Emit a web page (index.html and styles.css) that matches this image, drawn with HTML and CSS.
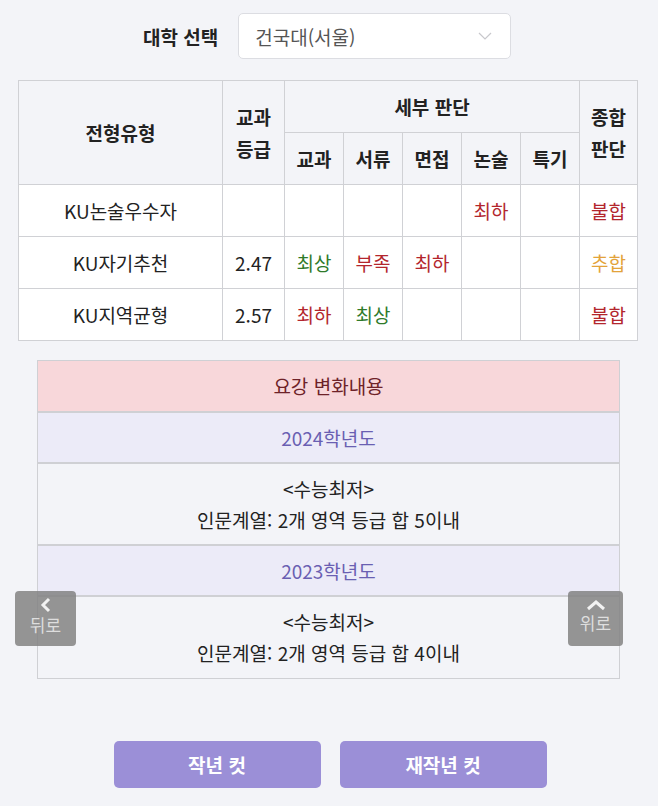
FILE: index.html
```html
<!DOCTYPE html>
<html lang="ko">
<head>
<meta charset="utf-8">
<link rel="stylesheet" href="styles.css">
</head>
<body>
<div class="page">
  <div class="select-row">
    <label class="select-label">대학 선택</label>
    <div class="select-box">
      <span class="select-text">건국대(서울)</span>
      <svg class="chev" width="14" height="8" viewBox="0 0 14 8"><path d="M1 1 L7 7 L13 1" fill="none" stroke="#c8c8cc" stroke-width="1.2"/></svg>
    </div>
  </div>

  <table class="result">
    <colgroup>
      <col style="width:204px"><col style="width:62px"><col style="width:59px"><col style="width:59px"><col style="width:59px"><col style="width:59px"><col style="width:59px"><col style="width:58px">
    </colgroup>
    <thead>
      <tr>
        <th rowspan="2">전형유형</th>
        <th rowspan="2">교과<br>등급</th>
        <th colspan="5">세부 판단</th>
        <th rowspan="2">종합<br>판단</th>
      </tr>
      <tr>
        <th>교과</th><th>서류</th><th>면접</th><th>논술</th><th>특기</th>
      </tr>
    </thead>
    <tbody>
      <tr>
        <td>KU논술우수자</td><td></td><td></td><td></td><td></td><td class="red">최하</td><td></td><td class="red">불합</td>
      </tr>
      <tr>
        <td>KU자기추천</td><td>2.47</td><td class="green">최상</td><td class="red">부족</td><td class="red">최하</td><td></td><td></td><td class="orange">추합</td>
      </tr>
      <tr>
        <td>KU지역균형</td><td>2.57</td><td class="red">최하</td><td class="green">최상</td><td></td><td></td><td></td><td class="red">불합</td>
      </tr>
    </tbody>
  </table>

  <div class="changes">
    <div class="changes-head">요강 변화내용</div>
    <div class="year">2024학년도</div>
    <div class="content">&lt;수능최저&gt;<br>인문계열: 2개 영역 등급 합 5이내</div>
    <div class="year">2023학년도</div>
    <div class="content">&lt;수능최저&gt;<br>인문계열: 2개 영역 등급 합 4이내</div>
  </div>

  <div class="buttons">
    <button class="cut-btn">작년 컷</button>
    <button class="cut-btn">재작년 컷</button>
  </div>

  <div class="float-btn back">
    <svg width="14" height="16" viewBox="0 0 14 16"><path d="M10 2 L4 8 L10 14" fill="none" stroke="#f2f2f2" stroke-width="3"/></svg>
    <span>뒤로</span>
  </div>
  <div class="float-btn up">
    <svg width="20" height="12" viewBox="0 0 20 12"><path d="M2 10 L10 3 L18 10" fill="none" stroke="#f2f2f2" stroke-width="3"/></svg>
    <span>위로</span>
  </div>
</div>
</body>
</html>
```

FILE: styles.css
```css
html, body {
  margin: 0;
  padding: 0;
  background: #f3f4f8;
}
body {
  font-family: "Noto Sans CJK KR", "Noto Sans", sans-serif;
  color: #222;
}
.page {
  position: relative;
  width: 658px;
  height: 806px;
  padding-top: 13px;
  box-sizing: border-box;
}
.select-row {
  display: flex;
  align-items: center;
  margin-left: 143px;
  gap: 20px;
}
.select-label {
  font-size: 19px;
  font-weight: 700;
  color: #222;
}
.select-box {
  width: 273px;
  height: 46px;
  box-sizing: border-box;
  background: #fff;
  border: 1px solid #dcdde2;
  border-radius: 5px;
  display: flex;
  align-items: center;
  justify-content: space-between;
  padding: 0 18px 0 16px;
}
.select-text {
  font-size: 19px;
  color: #555;
}
.result {
  margin: 21px 0 0 18px;
  width: 620px;
  border-collapse: collapse;
  table-layout: fixed;
  font-size: 19px;
}
.result th, .result td {
  border: 1px solid #d0d1d5;
  text-align: center;
  padding: 0;
}
.result th {
  background: #f3f4f8;
  font-weight: 700;
  color: #222;
  line-height: 32px;
  height: 51px;
}
.result td {
  background: #fff;
  height: 51px;
  color: #222;
}
.red { color: #b3262d !important; }
.green { color: #2f7a2a !important; }
.orange { color: #e3a33a !important; }

.changes {
  margin: 19px 0 0 37px;
  width: 583px;
  box-sizing: border-box;
  border: 1px solid #cfd0d4;
  text-align: center;
  font-size: 19px;
}
.changes-head {
  background: #f8d7da;
  color: #6e2228;
  height: 50px;
  line-height: 50px;
  border-bottom: 2px solid #cfd0d4;
}
.year {
  background: #ecebf8;
  color: #6a5fb2;
  height: 49px;
  line-height: 49px;
  border-bottom: 2px solid #cfd0d4;
}
.content {
  background: #f3f4f8;
  color: #222;
  line-height: 31px;
  padding: 9px 0 9px;
  border-bottom: 2px solid #cfd0d4;
}
.content:last-child {
  border-bottom: none;
  padding-bottom: 10px;
}
.buttons {
  display: flex;
  justify-content: center;
  gap: 19px;
  margin-top: 62px;
  padding-left: 2px;
}
.cut-btn {
  width: 207px;
  height: 47px;
  border: none;
  border-radius: 5px;
  background: #9b8fd7;
  color: #fff;
  font-family: "Noto Sans CJK KR", "Noto Sans", sans-serif;
  font-size: 19px;
  font-weight: 700;
}
.float-btn {
  position: absolute;
  top: 591px;
  height: 55px;
  box-sizing: border-box;
  background: rgba(130, 130, 130, 0.85);
  border-radius: 4px;
  display: flex;
  flex-direction: column;
  align-items: center;
  justify-content: flex-start;
  padding-top: 6px;
  color: #dedede;
  font-size: 17px;
  line-height: 22px;
}
.float-btn.back {
  left: 15px;
  width: 61px;
}
.float-btn.up {
  left: 568px;
  width: 55px;
  padding-top: 8px;
}
.float-btn span {
  margin-top: 1px;
}
```
